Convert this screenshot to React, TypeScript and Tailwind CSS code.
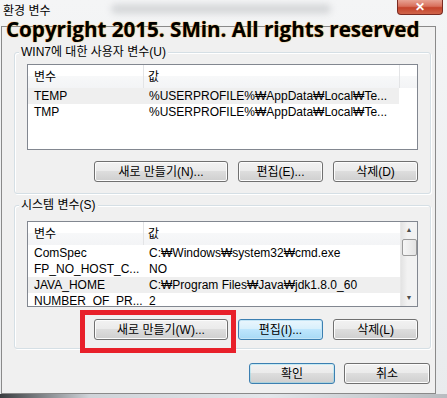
import React from "react";

const font = "font-['Liberation_Sans','Noto_Sans_CJK_KR',sans-serif]";

type Row = { name: string; value: string; selected?: boolean };

const userRows: Row[] = [
  { name: "TEMP", value: "%USERPROFILE%₩AppData₩Local₩Te...", selected: true },
  { name: "TMP", value: "%USERPROFILE%₩AppData₩Local₩Te..." },
];

const systemRows: Row[] = [
  { name: "ComSpec", value: "C:₩Windows₩system32₩cmd.exe" },
  { name: "FP_NO_HOST_C...", value: "NO" },
  { name: "JAVA_HOME", value: "C:₩Program Files₩Java₩jdk1.8.0_60", selected: true },
  { name: "NUMBER_OF_PR...", value: "2" },
];

const Button: React.FC<{ label: string; variant?: "normal" | "focused" | "default"; className?: string }> = ({
  label,
  variant = "normal",
  className = "",
}) => {
  const look =
    variant === "focused"
      ? "border-[#3c7fb1] bg-[linear-gradient(#eaf6fd_0%,#d9f0fc_45%,#bee6fd_50%,#a7d9f5_100%)] shadow-[inset_0_0_0_1px_#c4e5f6]"
      : variant === "default"
      ? "border-[#3c7fb1] bg-[linear-gradient(#f2f2f2_0%,#ebebeb_45%,#dddddd_50%,#cfcfcf_100%)] shadow-[inset_0_0_0_1px_#48d8fb40]"
      : "border-[#707070] bg-[linear-gradient(#f2f2f2_0%,#ebebeb_45%,#dddddd_50%,#cfcfcf_100%)] shadow-[inset_0_0_0_1px_#fcfcfc]";
  return (
    <button className={`h-[21px] rounded-[3px] border pt-[1px] text-[12px] leading-none text-black ${look} ${className}`}>
      {label}
    </button>
  );
};

const ListBox: React.FC<{ rows: Row[]; scroll?: boolean }> = ({ rows, scroll }) => (
  <div className="flex h-[86px] border border-[#828790] bg-white overflow-hidden">
    <div className="flex-1 flex flex-col">
      <div className="flex h-[23px] shrink-0 items-center bg-[linear-gradient(#ffffff_0%,#ffffff_50%,#f7f8f9_50%,#f3f4f6_100%)]">
        <div className="w-[116px] pl-[6px] border-r border-[#e3e4e6] h-full flex items-center">변수</div>
        <div className="flex-1 pl-[4px] h-full flex items-center">값</div>
        {!scroll && <div className="w-[18px] h-full border-l border-[#e3e4e6]" />}
      </div>
      {rows.map((r) => (
        <div
          key={r.name}
          className={`flex h-[16px] shrink-0 items-center ${r.selected ? "bg-[#efefef]" : ""} ${
            scroll ? "" : "mr-[18px]"
          }`}
        >
          <div className="w-[116px] pl-[6px] whitespace-nowrap">{r.name}</div>
          <div className="flex-1 pl-[5px] whitespace-nowrap">{r.value}</div>
        </div>
      ))}
    </div>
    {scroll && (
      <div className="w-[17px] flex flex-col items-center bg-[linear-gradient(90deg,#e3e3e3,#f2f2f2_40%,#f2f2f2)] border-l border-[#e8e8e8]">
        <div className="h-[17px] flex items-center justify-center text-[7px] text-[#4d4d4d]">▲</div>
        <div className="w-[15px] h-[17px] rounded-[2px] border border-[#9a9a9a] bg-[linear-gradient(90deg,#f6f6f6,#e3e3e3)]" />
        <div className="flex-1" />
        <div className="h-[15px] flex items-center justify-center text-[7px] text-[#4d4d4d]">▼</div>
      </div>
    )}
  </div>
);

const Group: React.FC<{ title: string; children: React.ReactNode; className?: string }> = ({
  title,
  children,
  className = "",
}) => (
  <div
    className={`relative ml-[12px] w-[417px] rounded-[3px] border border-[#d5dfe5] shadow-[inset_1px_1px_0_#ffffff,1px_1px_0_#ffffff] px-[12px] pt-[11px] ${className}`}
  >
    <div className="absolute left-[4px] -top-[9px] bg-[#f0f0f0] px-[2px] leading-[16px]">{title}</div>
    {children}
  </div>
);

export default function App() {
  return (
    <div
      className={`relative w-[447px] h-[398px] overflow-hidden bg-[linear-gradient(180deg,#f4f5f6_0%,#e9ebed_100%)] text-[12px] text-black ${font}`}
    >
      {/* title bar */}
      <div className="flex h-[26px] items-start">
        <div className="pl-[3px] pt-[3px] text-[12px] leading-[16px] text-black">환경 변수</div>
        <div className="ml-[60px] mt-[4px] h-[10px] w-[220px] rounded-full bg-[#d6d8da] blur-[3px]" />
        <div className="ml-auto mr-[4px] flex h-[15px] w-[46px] items-center justify-center rounded-b-[4px] border border-t-0 border-[#7a2a22] bg-[linear-gradient(#e8a293_0%,#d8705c_45%,#c4432b_55%,#d0654b_100%)] text-[12px] font-bold leading-none text-white">
          ✕
        </div>
      </div>

      {/* window body */}
      <div className="ml-[1px] w-[435px] h-[368px] border border-[#8a8a8a] bg-[#f0f0f0] flex flex-col">
        <Group title="WIN7에 대한 사용자 변수(U)" className="mt-[25px] h-[142px]">
          <ListBox rows={userRows} />
          <div className="mt-[11px] flex justify-end gap-[10px]">
            <Button label="새로 만들기(N)..." className="w-[134px]" />
            <Button label="편집(E)..." className="w-[85px]" />
            <Button label="삭제(D)" className="w-[85px]" />
          </div>
        </Group>

        <Group title="시스템 변수(S)" className="mt-[11px] h-[144px] pt-[15px]">
          <ListBox rows={systemRows} scroll />
          <div className="mt-[12px] flex justify-end gap-[10px]">
            <div className="relative">
              <Button label="새로 만들기(W)..." className="w-[134px]" />
              <div className="absolute -left-[14px] -top-[9px] w-[156px] h-[43px] border-[5px] border-[#e8202a]" />
            </div>
            <Button label="편집(I)..." variant="focused" className="w-[85px]" />
            <Button label="삭제(L)" className="w-[85px]" />
          </div>
        </Group>

        <div className="mt-[14px] flex justify-end gap-[9px] pr-[5px]">
          <Button label="확인" variant="default" className="w-[86px]" />
          <Button label="취소" className="w-[86px]" />
        </div>
      </div>

      <div className="h-[4px] bg-[linear-gradient(90deg,#3a3d40,#cfd3d8_20%,#e3e6ea_60%,#b8bcc0)]" />

      {/* watermark */}
      <div className="absolute left-[6px] top-[15px] whitespace-nowrap font-['Open_Sans',sans-serif] text-[20.6px] font-bold leading-[28px] text-black [text-shadow:0_0_1px_#e8a23a,0_0_1px_#e8a23a]">
        Copyright 2015. SMin. All rights reserved
      </div>
    </div>
  );
}
